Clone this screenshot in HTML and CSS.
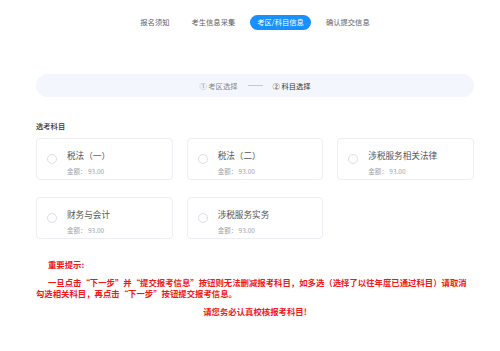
FILE: index.html
```html
<!DOCTYPE html>
<html lang="zh-CN">
<head>
    <meta charset="UTF-8">
    <meta name="viewport" content="width=device-width, initial-scale=1.0">
    <title>考区/科目信息</title>
    <link rel="stylesheet" href="styles.css">
</head>
<body>
    <nav class="tabs">
        <span class="tab">报名须知</span>
        <span class="tab">考生信息采集</span>
        <span class="tab active">考区/科目信息</span>
        <span class="tab">确认提交信息</span>
    </nav>

    <div class="container">
        <div class="steps">
            <span class="step">① 考区选择</span>
            <span class="step-line"></span>
            <span class="step current">② 科目选择</span>
        </div>

        <div class="section-title">选考科目</div>

        <div class="subjects">
            <div class="subject">
                <span class="radio"></span>
                <div class="subject-info">
                    <div class="subject-name">税法（一）</div>
                    <div class="subject-fee">金额：&nbsp;93.00</div>
                </div>
            </div>
            <div class="subject">
                <span class="radio"></span>
                <div class="subject-info">
                    <div class="subject-name">税法（二）</div>
                    <div class="subject-fee">金额：&nbsp;93.00</div>
                </div>
            </div>
            <div class="subject">
                <span class="radio"></span>
                <div class="subject-info">
                    <div class="subject-name">涉税服务相关法律</div>
                    <div class="subject-fee">金额：&nbsp;93.00</div>
                </div>
            </div>
            <div class="subject">
                <span class="radio"></span>
                <div class="subject-info">
                    <div class="subject-name">财务与会计</div>
                    <div class="subject-fee">金额：&nbsp;93.00</div>
                </div>
            </div>
            <div class="subject">
                <span class="radio"></span>
                <div class="subject-info">
                    <div class="subject-name">涉税服务实务</div>
                    <div class="subject-fee">金额：&nbsp;93.00</div>
                </div>
            </div>
        </div>

        <div class="notice">
            <div class="notice-title">重要提示:</div>
            <p class="notice-text">一旦点击“下一步”并“提交报考信息”按钮则无法删减报考科目，如多选（选择了以往年度已通过科目）请取消勾选相关科目，再点击“下一步”按钮提交报考信息。</p>
            <p class="notice-end">请您务必认真校核报考科目!</p>
        </div>
    </div>
</body>
</html>
```

FILE: styles.css
```css
body {
    font-family: "Noto Sans CJK SC", "Liberation Sans", sans-serif;
    background-color: #fff;
    color: #333;
    margin: 0;
}

.tabs {
    display: flex;
    justify-content: center;
    gap: 8px;
    padding: 15px 0 0 10px;
}

.tab {
    padding: 0 7px;
    height: 15px;
    line-height: 15px;
    font-size: 7.3px;
    color: #606266;
    border-radius: 8px;
}

.tab.active {
    background: #1890ff;
    color: #fff;
}

.container {
    padding: 0 26px 0 36px;
}

.steps {
    margin-top: 44px;
    height: 23px;
    border-radius: 12px;
    background: #f3f7fd;
    display: flex;
    align-items: center;
    justify-content: center;
    font-size: 7.3px;
    color: #888;
}

.step-line {
    width: 15px;
    height: 1px;
    background: #c8c8c8;
    margin: 0 10px;
}

.step.current {
    color: #333;
}

.section-title {
    margin-top: 24px;
    font-size: 7.3px;
    line-height: 10px;
    color: #333;
    font-weight: 500;
}

.subjects {
    margin-top: 7px;
    display: grid;
    grid-template-columns: repeat(3, 1fr);
    column-gap: 14px;
    row-gap: 17px;
}

.subject {
    height: 42px;
    box-sizing: border-box;
    border: 1px solid #eceef3;
    border-radius: 4px;
    display: flex;
    align-items: flex-start;
    padding-top: 11px;
}

.radio {
    width: 8px;
    height: 8px;
    border: 1px solid #dcdfe6;
    border-radius: 50%;
    margin: 4px 10px 0 10px;
}

.subject-name {
    font-size: 8.6px;
    line-height: 11px;
    color: #555;
}

.subject-fee {
    margin-top: 5px;
    font-size: 6.5px;
    line-height: 10px;
    color: #a0a4ab;
}

.notice {
    margin-top: 20px;
    color: #f01818;
    font-weight: bold;
    font-size: 8.4px;
    line-height: 11px;
}

.notice-title {
    padding-left: 12px;
}

.notice-text {
    margin: 7px 0 0;
    text-indent: 12px;
}

.notice-end {
    margin: 7px 0 0;
    text-align: center;
}
```
